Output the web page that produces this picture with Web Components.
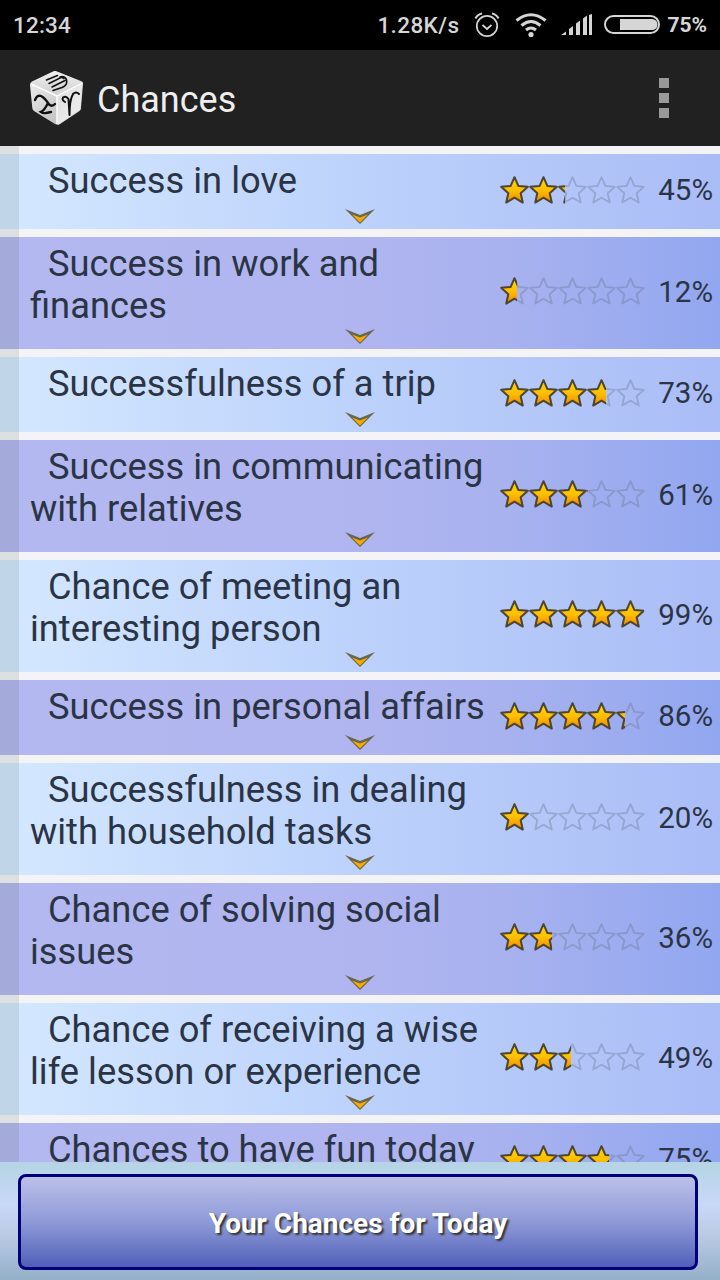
<!DOCTYPE html>
<html><head><meta charset="utf-8"><title>Chances</title>
<style>
html,body{margin:0;padding:0;background:#f5f6f6;font-family:Roboto,"Liberation Sans",sans-serif}
</style></head>
<body>
<chances-app>
  <status-bar slot="status"></status-bar>
  <app-bar slot="bar" title="Chances"></app-bar>
  <chance-list slot="list">
    <chance-row pct="45">Success in love</chance-row>
    <chance-row pct="12" alt>Success in work and finances</chance-row>
    <chance-row pct="73">Successfulness of a trip</chance-row>
    <chance-row pct="61" alt>Success in communicating with relatives</chance-row>
    <chance-row pct="99">Chance of meeting an interesting person</chance-row>
    <chance-row pct="86" alt>Success in personal affairs</chance-row>
    <chance-row pct="20">Successfulness in dealing with household tasks</chance-row>
    <chance-row pct="36" alt>Chance of solving social issues</chance-row>
    <chance-row pct="49">Chance of receiving a wise life lesson or experience</chance-row>
    <chance-row pct="75" alt>Chances to have fun today</chance-row>
  </chance-list>
  <action-footer slot="footer">Your Chances for Today</action-footer>
</chances-app>
<script>
function def(name, html){
  customElements.define(name, class extends HTMLElement{
    constructor(){super();this.attachShadow({mode:'open'}).innerHTML=html(this);}
  });
}
def('chances-app',()=>`<style>
:host{display:flex;flex-direction:column;width:720px;height:1280px;overflow:hidden}
.list{flex:1;min-height:0;overflow:hidden;display:block}
</style><slot name="status"></slot><slot name="bar"></slot><div class="list"><slot name="list"></slot></div><slot name="footer"></slot>`);

def('status-bar',()=>`<style>
:host{display:flex;align-items:center;height:50px;background:#000;color:#d6d6d6;font:500 22.5px/1 Roboto,sans-serif;box-sizing:border-box;padding:0 13px 0 13px;flex:none}
.t{letter-spacing:.2px;margin-top:1px}
.sp{flex:1}
svg{display:block;flex:none}
</style>
<span class="t">12:34</span><span class="sp"></span>
<span class="t" style="letter-spacing:.4px">1.28K/s</span>
<svg style="margin-left:14px" width="28" height="28" viewBox="0 0 28 28" fill="none" stroke="#d6d6d6" stroke-width="1.7"><circle cx="14" cy="15" r="10.2"/><path d="M9.5 14l4.5 4 4.500-4"/><path d="M2.500 7.500Q4.500 3.500 9 2.500M25.500 7.500Q23.500 3.500 19 2.500" stroke-width="2"/></svg>
<svg style="margin-left:14px" width="32" height="26" viewBox="0 0 32 26" fill="none" stroke="#d6d6d6" stroke-width="3"><path d="M1.500 8.500Q16 -3 30.500 8.500"/><path d="M6.500 13.500Q16 5.500 25.500 13.500"/><path d="M11 18Q16 14 21 18"/><circle cx="16" cy="22.500" r="2.600" fill="#d6d6d6" stroke="none"/></svg>
<svg style="margin-left:14px" width="32" height="22" viewBox="0 0 32 22" fill="#d6d6d6"><path d="M0 21L5 17.500V21ZM8 21V15L12 12V21ZM15 21V9.500L19 6.500V21ZM22 21V4.500L26 1.500V21Z M28 21V1L31 0V21Z"/></svg>
<svg style="margin-left:11px" width="57" height="22" viewBox="0 0 57 22"><rect x="1" y="2" width="54" height="17" rx="8.500" fill="none" stroke="#d6d6d6" stroke-width="2"/><path d="M16 5H48a5.500 5.500 0 0 1 0 11H16Z" fill="#d6d6d6"/></svg>
<span class="t" style="margin-left:6px;font-size:21px;letter-spacing:0;font-weight:700">75%</span>`);

def('dice-icon',()=>`<style>:host{display:block;width:54px;height:56px;flex:none}svg{display:block}</style>
<svg width="54" height="56" viewBox="30 70 54 56">
<defs>
<linearGradient id="a" x1="0" y1="0" x2="0" y2="1"><stop offset="0" stop-color="#f0f0f0"/><stop offset="1" stop-color="#cfcfcf"/></linearGradient>
<linearGradient id="b" x1="0" y1="0" x2="1" y2="1"><stop offset="0" stop-color="#f4f4f4"/><stop offset="1" stop-color="#b0b0b0"/></linearGradient>
<linearGradient id="c" x1="0" y1="0" x2="1" y2="1"><stop offset="0" stop-color="#dcdcdc"/><stop offset="1" stop-color="#f2f2f2"/></linearGradient>
</defs>
<path d="M53 71.500Q55 70.500 57 71.500L81 81Q83.500 82 83 84.500L81 108Q80.800 110 79 111.500L60 124Q57.500 125.500 55 124L34 111Q32.500 110 32.300 108L30 85Q30 82.500 32 81.500Z" fill="url(#b)"/>
<path d="M55 71L82.500 82.500L57 95.500L30.500 83.500Z" fill="url(#a)"/>
<path d="M57 95.500L82.500 82.500L80.500 109.500L58 125Z" fill="url(#c)"/>
<path d="M31 84L57 96V124" fill="none" stroke="#fff" stroke-width="1.400"/><path d="M57 96L82.500 83" fill="none" stroke="#fff" stroke-width="1.400"/>
<g fill="none" stroke="#111" stroke-linecap="round">
<path stroke-width="1.600" d="M46.500 80L57.500 75.500M49 83.500L61 77.500Q63 77 63.500 78.500M52 87L65 80.500M53 90.500L62 87.500Q68 85 66.500 79.500Q64 75.500 60 77"/>
<path stroke-width="2" d="M65 102Q61.500 100 63 97.500Q66 95.500 68.500 99L69.500 115M69.500 115Q69.500 100 73 94Q76 91 79 94"/>
<path stroke-width="2.400" d="M35 100Q37 94.500 41 96Q45 98 49 104.500Q52 107 55 104M48 103Q44 111 41 112Q43 113.500 46 113L51 112"/>
</g></svg>`);

def('app-bar',el=>`<style>
:host{display:flex;align-items:center;height:96px;background:#212121;flex:none;padding-left:30px;box-sizing:border-box}
.ti{font:400 36px/1 Roboto,sans-serif;color:#eee;margin-left:13px;margin-top:4px}
.sp{flex:1}
.menu{display:flex;flex-direction:column;gap:5px;margin-right:51px}
.menu i{display:block;width:10px;height:10px;background:#999}
</style><dice-icon></dice-icon><span class="ti">${el.getAttribute('title')}</span><span class="sp"></span><div class="menu"><i></i><i></i><i></i></div>`);

def('chance-list',()=>`<style>
:host{display:block;position:relative;height:100%;overflow:hidden;background:#f4f4f6;padding-top:8px;box-sizing:border-box}
.strip{position:absolute;left:0;top:0;bottom:0;width:19px;background:rgba(60,85,62,.12);pointer-events:none}
::slotted(chance-row){margin-bottom:8px}
</style><slot></slot><div class="strip"></div>`);

const starPts=(()=>{const p=[];for(let i=0;i<10;i++){const r=i%2?6.5:14,a=-Math.PI/2+i*Math.PI/5;p.push((14.5+r*Math.cos(a)).toFixed(2)+','+(15.2+r*Math.sin(a)).toFixed(2));}return p.join(' ');})();
def('star-rating',el=>{
  const w=145*(+el.getAttribute('pct'))/100;
  const g=[0,1,2,3,4].map(i=>`<polygon points="${starPts}" transform="translate(${i*29},0)" fill="url(#g)" stroke="#4e4630" stroke-width="2" stroke-linejoin="round"/>`).join('');
  const e=[0,1,2,3,4].map(i=>`<polygon points="${starPts}" transform="translate(${i*29},0)" fill="none" stroke="#6a7590" stroke-opacity=".38" stroke-width="1.800" stroke-linejoin="round"/>`).join('');
  return `<style>:host{display:block;position:relative;width:145px;height:30px;flex:none}
svg{display:block;position:absolute;left:0;top:0}
.fill{position:absolute;left:0;top:0;height:30px;overflow:hidden}</style>
<svg width="145" height="30" viewBox="0 0 145 30">${e}</svg>
<div class="fill" style="width:${w}px"><svg width="145" height="30" viewBox="0 0 145 30"><defs><linearGradient id="g" x1="0" y1="0" x2="0" y2="1"><stop offset="0" stop-color="#ffd800"/><stop offset=".5" stop-color="#ffc000"/><stop offset="1" stop-color="#f08800"/></linearGradient></defs>${g}</svg></div>`;
});

def('chance-row',el=>{
  const pct=el.getAttribute('pct');
  return `<style>
:host{display:grid;grid-template-columns:470px 145px 1fr;align-items:center;min-height:75px;position:relative;padding-left:30px;box-sizing:border-box;background:linear-gradient(90deg,#d4e8ff 0%,#bcd2fb 50%,#aabcf6 100%);color:#2b3444}
:host([alt]){background:linear-gradient(90deg,#b3b8f1 0%,#b0b5ef 50%,#a8b2ef 70%,#92a7f0 100%)}
.txt{align-self:start;font:400 36.3px/42px Roboto,sans-serif;padding:6px 0 22px;text-indent:18px;margin-right:-6px}
.pc{font:400 29.5px/1 Roboto,sans-serif;text-align:right;padding:0 7px 1px 0;white-space:nowrap}
star-rating{margin-bottom:2px}
svg{position:absolute;left:344px;bottom:4px;display:block}
</style><div class="txt"><slot></slot></div><star-rating pct="${pct}"></star-rating><div class="pc">${pct}%</div>
<svg width="32" height="17" viewBox="0 0 32 17"><path d="M1 1L16 16L31 1L16 7Z" fill="#68664c"/><path d="M8 6.500L16 14.500L24 6.500L16 9.500Z" fill="#f8aa00"/></svg>`;
});

def('action-footer',()=>`<style>
:host{display:block;flex:none;height:118px;box-sizing:border-box;padding:12px 22px 10px 18px;background:linear-gradient(180deg,#b5d4e4 0%,#c8d8f8 35%,#bccce6 60%,#94b0c8 100%)}
button{display:flex;width:100%;height:96px;align-items:center;justify-content:center;box-sizing:border-box;border:3px solid #00007a;border-radius:8px;padding:4px 0 0;background:linear-gradient(180deg,#bcc0e8 0%,#8e9ad8 50%,#5060b8 100%);color:#fff;font:700 28px/1 Roboto,sans-serif;text-shadow:2px 2px 2px #333}
</style><button><slot></slot></button>`);
</script>
</body></html>
